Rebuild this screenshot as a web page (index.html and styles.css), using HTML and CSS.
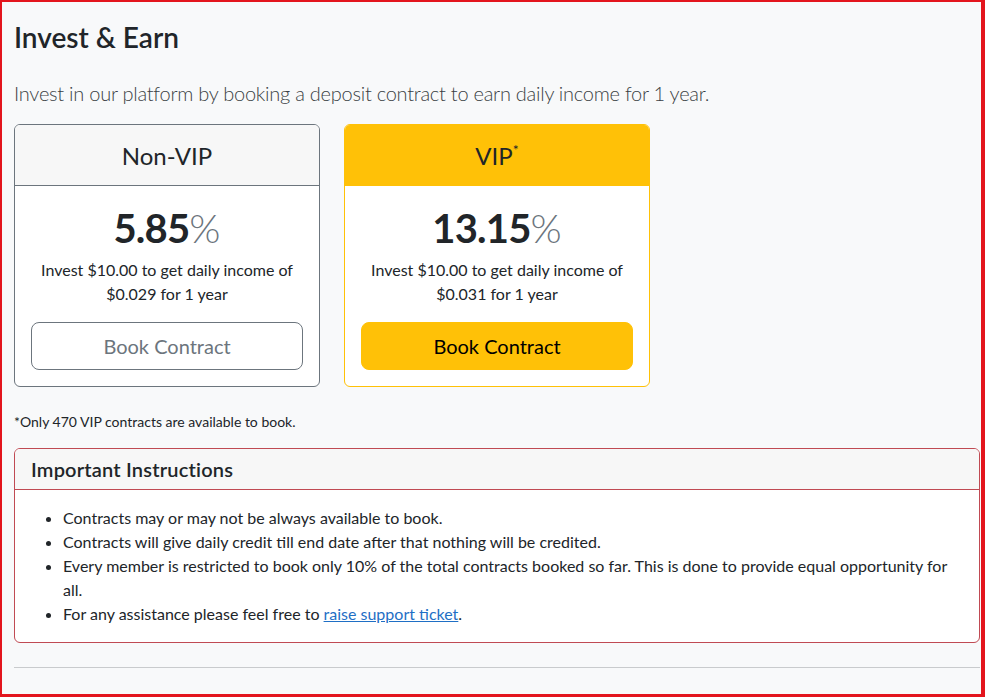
FILE: index.html
```html
<!DOCTYPE html>
<html lang="en">
<head>
<meta charset="utf-8">
<title>Invest &amp; Earn</title>
<link rel="stylesheet" href="styles.css">
</head>
<body>
<div class="frame">
  <main class="page">
    <h1 class="title">Invest &amp; Earn</h1>
    <p class="lead">Invest in our platform by booking a deposit contract to earn daily income for 1 year.</p>
    <div class="plans">
      <div class="plan plan-std">
        <div class="plan-head"><h2>Non-VIP</h2></div>
        <div class="plan-body">
          <div class="rate">5.85<span class="pct">%</span></div>
          <p class="desc">Invest $10.00 to get daily income of<br>$0.029 for 1 year</p>
          <button class="btn btn-outline" type="button">Book Contract</button>
        </div>
      </div>
      <div class="plan plan-vip">
        <div class="plan-head"><h2>VIP<sup class="star">*</sup></h2></div>
        <div class="plan-body">
          <div class="rate">13.15<span class="pct">%</span></div>
          <p class="desc">Invest $10.00 to get daily income of<br>$0.031 for 1 year</p>
          <button class="btn btn-warning" type="button">Book Contract</button>
        </div>
      </div>
    </div>
    <p class="note">*Only 470 VIP contracts are available to book.</p>
    <section class="notice">
      <div class="notice-head"><h3>Important Instructions</h3></div>
      <div class="notice-body">
        <ul>
          <li>Contracts may or may not be always available to book.</li>
          <li>Contracts will give daily credit till end date after that nothing will be credited.</li>
          <li>Every member is restricted to book only 10% of the total contracts booked so far. This is done to provide equal opportunity for all.</li>
          <li>For any assistance please feel free to <a href="#">raise support ticket</a>.</li>
        </ul>
      </div>
    </section>
    <hr class="rule">
  </main>
</div>
</body>
</html>
```
FILE: styles.css
```css
html, body {
  margin: 0;
  padding: 0;
}
body {
  font-family: Lato, "Noto Sans", sans-serif;
  color: #212529;
  background: #ffffff;
}
.frame {
  box-sizing: border-box;
  width: 985px;
  height: 697px;
  border-style: solid;
  border-color: #e3151d;
  border-width: 2px 4px 3px 2px;
  background: #f8f9fa;
  overflow: hidden;
}
.page {
  padding: 19px 1px 0 12px;
}
.title {
  margin: 0 0 23px;
  font-size: 28px;
  font-weight: 600;
  line-height: 1.2;
}
.lead {
  margin: 0 0 16px;
  font-size: 20px;
  font-weight: 300;
  line-height: 1.5;
  letter-spacing: -0.25px;
  color: #3a3f44;
}
.plans {
  display: flex;
  gap: 24px;
  margin-bottom: 24px;
}
.plan {
  width: 306px;
  box-sizing: border-box;
  border: 1px solid #6c757d;
  border-radius: 6px;
  background: #ffffff;
  overflow: hidden;
  text-align: center;
}
.plan-head {
  padding: 17px 16px 15px;
  background: #f7f7f7;
  border-bottom: 1px solid #6c757d;
}
.plan-head h2 {
  margin: 0;
  font-size: 24px;
  font-weight: 400;
  line-height: 1.2;
}
.star {
  font-size: 14px;
  line-height: 0;
  vertical-align: 10px;
}
.plan-vip {
  border-color: #ffc107;
}
.plan-vip .plan-head {
  background: #ffc107;
  border-bottom-color: #ffc107;
}
.plan-body {
  padding: 16px;
}
.rate {
  margin-bottom: 8px;
  padding-top: 2px;
  height: 46px;
  font-size: 40px;
  font-weight: 700;
  line-height: 1.2;
  letter-spacing: -0.8px;
}
.pct {
  font-weight: 300;
  color: #6c757d;
  letter-spacing: 0;
}
.desc {
  margin: 0 0 16px;
  font-size: 16px;
  line-height: 1.5;
}
.btn {
  display: block;
  width: 100%;
  box-sizing: border-box;
  padding: 8px 16px;
  font-family: inherit;
  font-size: 20px;
  line-height: 1.5;
  border-radius: 8px;
  border: 1px solid;
  cursor: pointer;
}
.btn-outline {
  background: transparent;
  border-color: #6c757d;
  color: #6c757d;
}
.btn-warning {
  background: #ffc107;
  border-color: #ffc107;
  color: #000000;
}
.note {
  margin: 0 0 16px;
  font-size: 14px;
  line-height: 1.5;
}
.notice {
  border: 1px solid #c04a53;
  border-radius: 6px;
  overflow: hidden;
  background: #ffffff;
}
.notice-head {
  padding: 8px 16px;
  background: #f7f7f7;
  border-bottom: 1px solid #c04a53;
}
.notice-head h3 {
  margin: 0;
  font-size: 20px;
  font-weight: 600;
  line-height: 1.2;
  letter-spacing: 0.2px;
}
.notice-body {
  padding: 16px;
}
.notice-body ul {
  margin: 0;
  padding-left: 32px;
  font-size: 16px;
  line-height: 1.5;
}
.notice-body a {
  color: #1f6fc5;
}
.rule {
  margin: 24px 0 0;
  border: 0;
  border-top: 1px solid #c9cbcd;
}
```
